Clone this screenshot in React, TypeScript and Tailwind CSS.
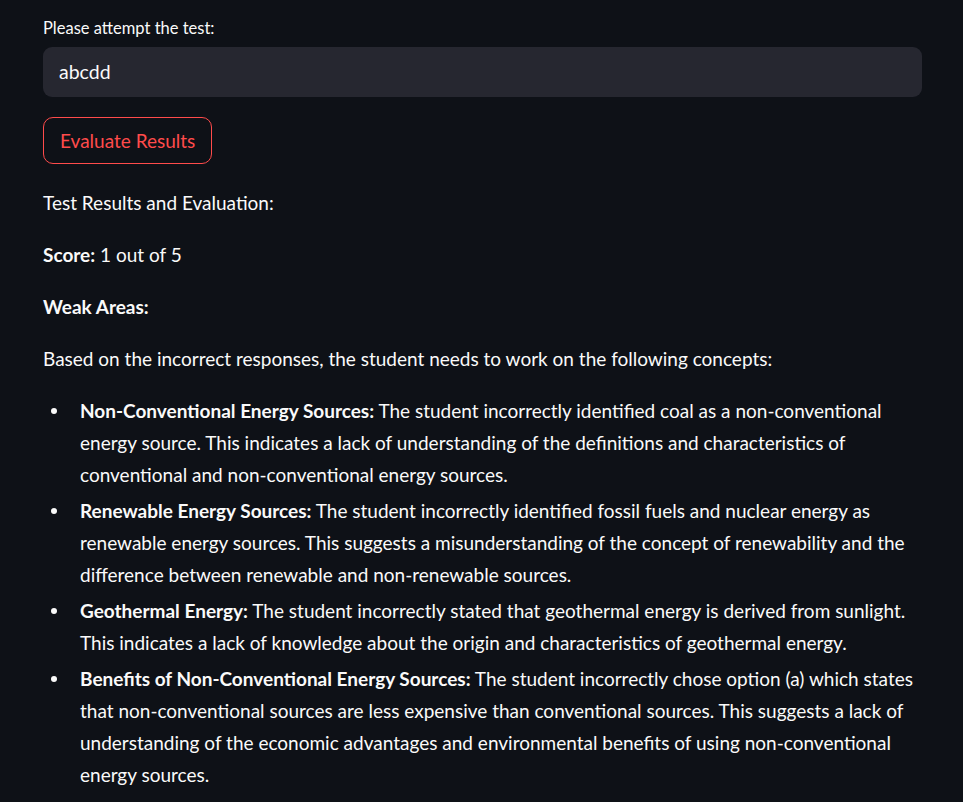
const items: { title: string; body: string }[] = [
  {
    title: "Non-Conventional Energy Sources:",
    body: "The student incorrectly identified coal as a non-conventional energy source. This indicates a lack of understanding of the definitions and characteristics of conventional and non-conventional energy sources.",
  },
  {
    title: "Renewable Energy Sources:",
    body: "The student incorrectly identified fossil fuels and nuclear energy as renewable energy sources. This suggests a misunderstanding of the concept of renewability and the difference between renewable and non-renewable sources.",
  },
  {
    title: "Geothermal Energy:",
    body: "The student incorrectly stated that geothermal energy is derived from sunlight. This indicates a lack of knowledge about the origin and characteristics of geothermal energy.",
  },
  {
    title: "Benefits of Non-Conventional Energy Sources:",
    body: "The student incorrectly chose option (a) which states that non-conventional sources are less expensive than conventional sources. This suggests a lack of understanding of the economic advantages and environmental benefits of using non-conventional energy sources.",
  },
];

export default function App() {
  return (
    <div className="min-h-screen bg-[#0e1117] text-[#fafafa] font-['Lato',sans-serif] text-[19px] leading-[32px]">
      <div className="w-[879px] ml-[43px] pt-[16px]">
        <label className="block text-[16.5px] leading-[24px] mb-[7px] text-[#fafafa]">
          Please attempt the test:
        </label>
        <div className="h-[50px] rounded-[9px] bg-[#262730] flex items-center px-[16px] text-[19.5px]">
          abcdd
        </div>
        <button className="mt-[20px] h-[47px] px-[16px] rounded-[10px] border border-[#ff4b4b] text-[#ff4b4b] text-[19px] bg-transparent flex items-center">
          Evaluate Results
        </button>
        <p className="mt-[23px] mb-[20px]">Test Results and Evaluation:</p>
        <p className="mb-[20px]">
          <strong className="font-bold">Score:</strong> 1 out of 5
        </p>
        <p className="mb-[20px]">
          <strong className="font-bold">Weak Areas:</strong>
        </p>
        <p className="mb-[20px]">
          Based on the incorrect responses, the student needs to work on the following concepts:
        </p>
        <ul className="flex flex-col gap-[4px]">
          {items.map((it) => (
            <li key={it.title} className="flex">
              <span className="w-[37px] shrink-0 flex">
                <span className="mt-[13px] ml-[8px] w-[6px] h-[6px] rounded-full bg-[#fafafa]" />
              </span>
              <p className="flex-1">
                <strong className="font-bold">{it.title}</strong> {it.body}
              </p>
            </li>
          ))}
        </ul>
      </div>
    </div>
  );
}
